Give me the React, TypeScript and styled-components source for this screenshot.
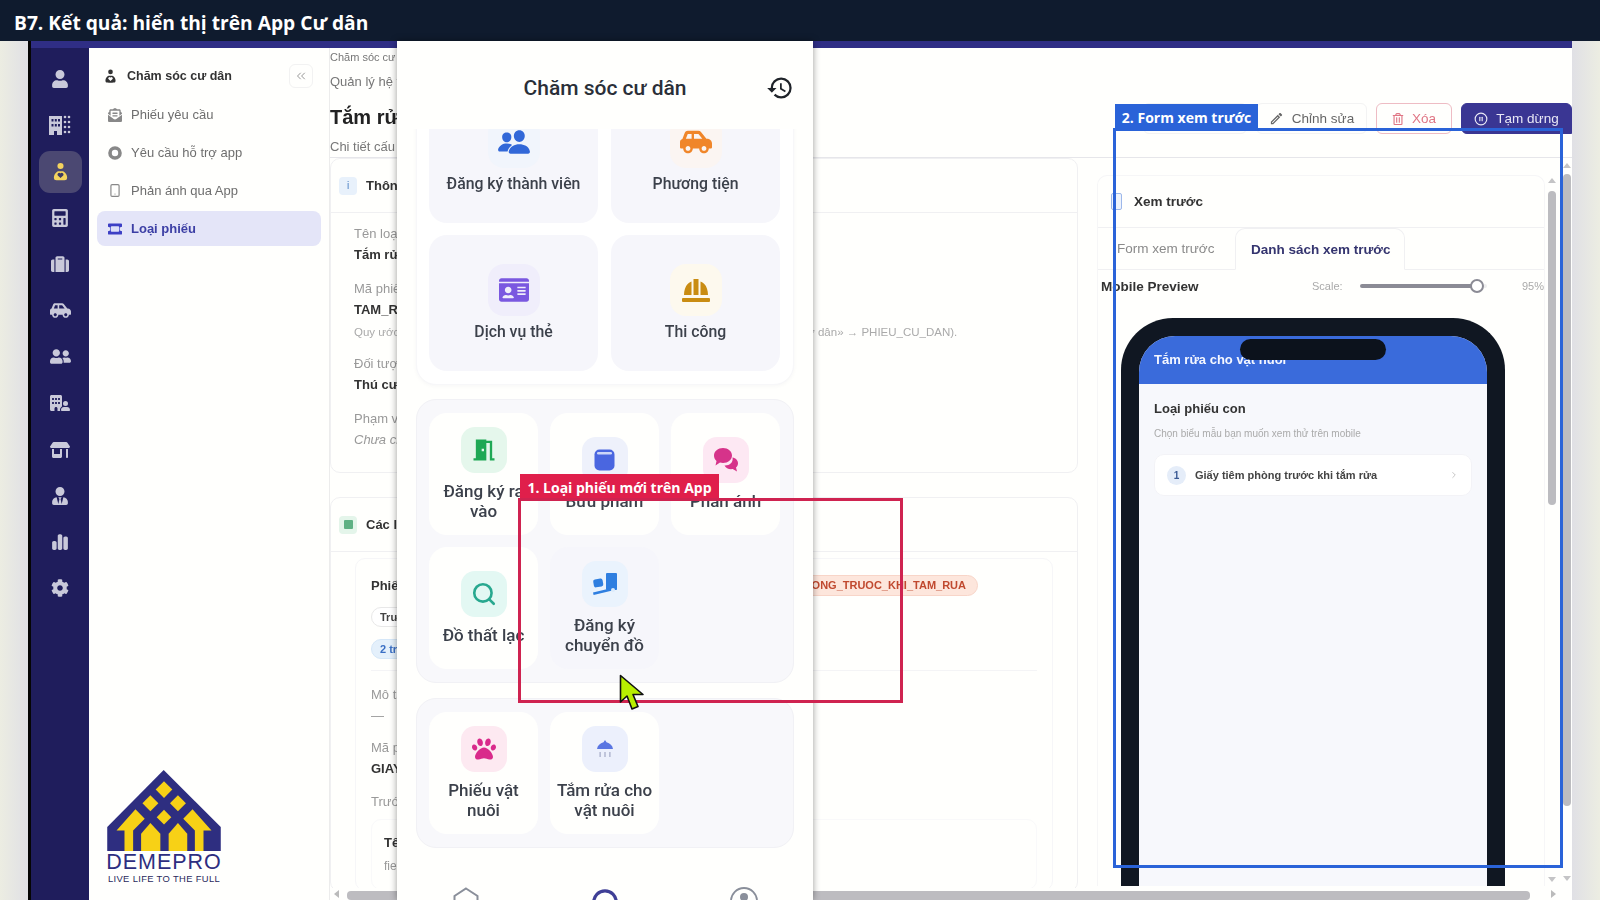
import React from "react";
import styled, { createGlobalStyle } from "styled-components";
import { FaUser, FaCalculator, FaSuitcase, FaCarSide, FaUserFriends, FaUserTie, FaCog, FaPaw, FaIdCard, FaEnvelopeOpenText, FaRegTrashAlt } from "react-icons/fa";
import { FaBuildingUser, FaChartSimple, FaShop } from "react-icons/fa6";
import { MdMeetingRoom, MdHistory, MdOutlineEdit } from "react-icons/md";
import { IoPeople } from "react-icons/io5";
import { Search, Smartphone, Headphones, ChevronsLeft, ChevronRight, CirclePause } from "lucide-react";

const Global = createGlobalStyle`
  html, body { margin: 0; padding: 0; background: #fff; }
  * { box-sizing: border-box; }
`;

const Page = styled.div`
  position: relative;
  width: 1600px;
  height: 900px;
  overflow: hidden;
  display: flex;
  flex-direction: column;
  font-family: "Liberation Sans", Arial, sans-serif;
  background: #fff;
`;
const TitleBar = styled.header`
  height: 41px;
  flex: none;
  background: #0f1b2e;
  color: #fff;
  font: 700 19.2px/45px "Open Sans", sans-serif;
  padding-left: 14px;
`;
const Stage = styled.div`
  flex: 1;
  min-height: 0;
  display: flex;
  position: relative;
`;
const Gutter = styled.div<{ $w: number; $flip?: boolean }>`
  width: ${(p) => p.$w}px;
  flex: none;
  background: linear-gradient(${(p) => (p.$flip ? "270deg" : "90deg")}, #ecede2, #e0e0e5);
`;
const AppFrame = styled.div`
  flex: 1;
  min-width: 0;
  display: flex;
  flex-direction: column;
  border-left: 3px solid #050505;
  background: #fffffd;
  filter: blur(0.35px);
`;
const TopStrip = styled.div`
  height: 7px;
  flex: none;
  background: #2f2e85;
`;
const AppRow = styled.div`
  flex: 1;
  min-height: 0;
  display: flex;
`;
const Sidebar = styled.nav`
  width: 58px;
  flex: none;
  background: #1f1d5c;
  padding-top: 8px;
  display: flex;
  flex-direction: column;
  align-items: center;
`;
const RailItem = styled.div<{ $active?: boolean }>`
  height: 46.3px;
  width: 100%;
  display: flex;
  align-items: center;
  justify-content: center;
  color: #c9c9da;
  font-size: 18px;
  position: relative;
  ${(p) =>
    p.$active &&
    `&::before { content: ""; position: absolute; left: 8px; right: 7px; top: 2px; bottom: 2px; background: #4b4872; border-radius: 11px; }`}
  & > svg { position: relative; }
`;
const SubNav = styled.aside`
  width: 240px;
  flex: none;
  background: #fffffd;
`;
const SubHead = styled.div`
  display: flex;
  align-items: center;
  height: 24px;
  margin: 16px 16px 9px 15px;
  color: #333;
  font-size: 12.5px;
  font-weight: 700;
  gap: 10px;
`;
const CollapseBtn = styled.div`
  margin-left: auto;
  width: 24px;
  height: 24px;
  border: 1px solid #f2f2f2;
  border-radius: 6px;
  display: flex;
  align-items: center;
  justify-content: center;
  color: #888;
`;
const NavList = styled.div`
  display: flex;
  flex-direction: column;
  gap: 3px;
  margin: 0 8px;
`;
const NavItem = styled.div<{ $active?: boolean }>`
  height: 35px;
  border-radius: 8px;
  padding-left: 11px;
  display: flex;
  align-items: center;
  gap: 9px;
  font-size: 13px;
  font-weight: ${(p) => (p.$active ? 700 : 400)};
  color: ${(p) => (p.$active ? "#3c3fa5" : "#6e6e6e")};
  background: ${(p) => (p.$active ? "#e4e5f8" : "transparent")};
  & > svg { width: 14px; flex: none; color: ${(p) => (p.$active ? "#3c3fc5" : "#888")}; }
`;
const Main = styled.main`
  flex: 1;
  min-width: 0;
  display: flex;
  flex-direction: column;
  border-left: 1px solid #ececec;
`;
const PageHead = styled.div`
  height: 110px;
  flex: none;
  display: flex;
  align-items: flex-start;
  justify-content: space-between;
  border-bottom: 1px solid #e6e6ea;
`;
const HeadText = styled.div`
  padding-top: 2px;
  color: #777;
`;
const Crumb = styled.div`
  font-size: 11px;
  line-height: 14px;
`;
const SubTitle = styled.div`
  font-size: 13px;
  line-height: 16px;
  margin-top: 10px;
`;
const PageTitle = styled.h1`
  margin: 13px 0 0;
  font-size: 20px;
  line-height: 28px;
  color: #222;
`;
const Desc = styled.div`
  font-size: 13px;
  line-height: 16px;
  margin-top: 8px;
`;
const Toolbar = styled.div`
  display: flex;
  gap: 9px;
  padding-top: 55px;
`;
const ToolBtn = styled.div<{ $w: number; $tone?: "danger" | "primary" }>`
  width: ${(p) => p.$w}px;
  height: 31px;
  border-radius: 6px 6px ${(p) => (p.$tone === "primary" ? "0 6px" : "6px 6px")};
  display: flex;
  align-items: center;
  justify-content: center;
  gap: 8px;
  font-size: 13.5px;
  border: 1px solid ${(p) => (p.$tone === "danger" ? "#eebcc4" : p.$tone === "primary" ? "#3a3693" : "#f3f3f3")};
  background: ${(p) => (p.$tone === "primary" ? "#3a3693" : "#fffffd")};
  color: ${(p) => (p.$tone === "danger" ? "#e07685" : p.$tone === "primary" ? "#e9e9f6" : "#666")};
`;
const Body = styled.div`
  flex: 1;
  min-height: 0;
  display: flex;
`;
const LeftCol = styled.div`
  width: 748px;
  flex: none;
  display: flex;
  flex-direction: column;
  gap: 24px;
  overflow: hidden;
`;
const Card = styled.section<{ $h?: number }>`
  flex: none;
  border: 1px solid #f0f0f2;
  border-radius: 10px;
  ${(p) => (p.$h ? `height: ${p.$h}px;` : "")}
`;
const CardHead = styled.div`
  height: 54px;
  display: flex;
  align-items: center;
  gap: 9px;
  padding-left: 8px;
  border-bottom: 1px solid #f0f0f2;
  font-size: 13px;
  font-weight: 700;
  color: #333;
`;
const CardGlyph = styled.span<{ $bg: string; $fg: string }>`
  width: 18px;
  height: 18px;
  border-radius: 4px;
  background: ${(p) => p.$bg};
  color: ${(p) => p.$fg};
  font-size: 10px;
  font-weight: 400;
  display: flex;
  align-items: center;
  justify-content: center;
`;
const GreenDot = styled.i`
  width: 9px;
  height: 9px;
  background: #5fb184;
  border-radius: 1px;
`;
const FieldList = styled.div`
  padding: 12px 23px;
  display: flex;
  flex-direction: column;
  gap: 15px;
`;
const Field = styled.div<{ $mt?: number }>`
  margin-top: ${(p) => p.$mt ?? 0}px;
`;
const FieldLabel = styled.div`
  font-size: 13px;
  line-height: 18px;
  color: #999;
`;
const FieldValue = styled.div<{ $italic?: boolean; $muted?: boolean }>`
  margin-top: 2px;
  font-size: 13px;
  line-height: 20px;
  font-weight: ${(p) => (p.$italic || p.$muted ? 400 : 700)};
  font-style: ${(p) => (p.$italic ? "italic" : "normal")};
  color: ${(p) => (p.$italic || p.$muted ? "#999" : "#333")};
`;
const FieldNote = styled.div`
  margin-top: 4px;
  font-size: 11.5px;
  line-height: 16px;
  color: #aaa;
  white-space: nowrap;
`;
const CardPad = styled.div`
  padding: 6px 24px 0;
`;
const InnerCard = styled.div`
  border: 1px solid #f6f6f8;
  border-radius: 10px;
  padding: 15px 15px 0;
`;
const NameRow = styled.div`
  display: flex;
  align-items: center;
  justify-content: space-between;
  height: 22px;
  padding-right: 59px;
  font-size: 13px;
  font-weight: 700;
  color: #333;
`;
const TagPill = styled.span`
  height: 21px;
  padding: 0 11px;
  border-radius: 11px;
  background: #fde6dc;
  border: 1px solid #f8d5c8;
  color: #c0492f;
  font-size: 11px;
  line-height: 19px;
  white-space: nowrap;
`;
const PillRow = styled.div<{ $mt: number }>`
  display: flex;
  margin-top: ${(p) => p.$mt}px;
`;
const SmallPill = styled.span<{ $blue?: boolean }>`
  height: 20px;
  padding: 0 8px;
  border-radius: 10px;
  font-size: 11px;
  line-height: 18px;
  font-weight: 700;
  background: ${(p) => (p.$blue ? "#e4f0fb" : "#fff")};
  border: 1px solid ${(p) => (p.$blue ? "#d5e7f8" : "#e8e8e8")};
  color: ${(p) => (p.$blue ? "#3a6fc4" : "#444")};
  white-space: nowrap;
`;
const Rule = styled.hr`
  border: 0;
  border-top: 1px solid #f4f4f6;
  margin: 11px 0 15px;
`;
const NestedCard = styled.div`
  margin-top: 8px;
  border: 1px solid #f9f9fa;
  border-radius: 10px;
  padding: 14px 12px;
`;
const NestedName = styled.div`
  font-size: 13px;
  line-height: 18px;
  font-weight: 700;
  color: #333;
`;
const NestedKey = styled.div`
  margin-top: 5px;
  font-size: 12px;
  line-height: 18px;
  color: #999;
`;
const PreviewCard = styled.section`
  width: 448px;
  height: 711px;
  flex: none;
  margin: 17px 0 0 19px;
  border: 1px solid #f6f6f7;
  border-bottom: 0;
  border-radius: 10px 10px 0 0;
  overflow: hidden;
`;
const PreviewHead = styled.div`
  height: 52px;
  display: flex;
  align-items: center;
  gap: 12px;
  padding-left: 13px;
  border-bottom: 1px solid #f0f0f2;
  font-size: 13.5px;
  font-weight: 700;
  color: #333;
`;
const PhoneGlyph = styled.i`
  width: 11px;
  height: 17px;
  border: 1.5px solid #9db8ea;
  background: #eef3fc;
  border-radius: 2px;
`;
const Tabs = styled.div`
  height: 42px;
  display: flex;
  align-items: stretch;
  border-bottom: 1px solid #f0f0f2;
`;
const Tab = styled.div<{ $active?: boolean }>`
  width: ${(p) => (p.$active ? "170px" : "137px")};
  padding-left: ${(p) => (p.$active ? "15px" : "19px")};
  display: flex;
  align-items: center;
  font-size: 13.5px;
  font-weight: ${(p) => (p.$active ? 700 : 400)};
  color: ${(p) => (p.$active ? "#35356f" : "#8a8a8a")};
  ${(p) =>
    p.$active &&
    `border: 1px solid #f0f0f2; border-bottom: 1px solid #fffffd; border-radius: 10px 10px 0 0; margin-bottom: -1px; background: #fffffd;`}
`;
const PreviewBar = styled.div`
  height: 32px;
  display: flex;
  align-items: center;
  padding: 0 0 0 3px;
  font-size: 11px;
  color: #aaa;
`;
const PreviewLabel = styled.strong`
  font-size: 13.5px;
  color: #333;
  width: 211px;
`;
const ScaleText = styled.span`
  width: 48px;
`;
const SliderTrack = styled.div`
  position: relative;
  width: 127px;
  height: 4px;
  border-radius: 2px;
  background: linear-gradient(90deg, #8b8b95 92%, #eee 92%);
`;
const SliderThumb = styled.span`
  position: absolute;
  left: 110px;
  top: -5px;
  width: 14px;
  height: 14px;
  border-radius: 50%;
  background: #fff;
  border: 2px solid #8b8b95;
`;
const ScaleValue = styled.span`
  margin-left: auto;
`;
const Device = styled.div`
  width: 384px;
  height: 569px;
  margin: 16px 0 0 23px;
  position: relative;
  border: 18px solid #101722;
  border-bottom: 0;
  border-radius: 52px 52px 0 0;
  background: #101722;
`;
const DeviceScreen = styled.div`
  height: 100%;
  border-radius: 36px 36px 0 0;
  overflow: hidden;
  background: #f7f8fc;
`;
const DeviceBar = styled.div`
  height: 48px;
  background: #3a6bdb;
  color: #f4f7ff;
  padding: 15px 0 0 15px;
  font-size: 13px;
  line-height: 18px;
  font-weight: 700;
`;
const Notch = styled.div`
  position: absolute;
  left: 101px;
  top: 3px;
  width: 146px;
  height: 21px;
  border-radius: 11px;
  background: #0c121c;
`;
const DeviceBody = styled.div`
  padding: 15px 15px;
`;
const DeviceH = styled.div`
  font-size: 13px;
  line-height: 20px;
  font-weight: 700;
  color: #333;
`;
const DeviceHint = styled.div`
  font-size: 10px;
  line-height: 14px;
  margin-top: 8px;
  color: #aaa;
`;
const FormRow = styled.div`
  margin-top: 13px;
  height: 42px;
  background: #fff;
  border: 1px solid #f3f3f7;
  border-radius: 10px;
  display: flex;
  align-items: center;
  padding: 0 12px;
  gap: 9px;
  font-size: 11px;
  font-weight: 700;
  color: #444;
`;
const NumBadge = styled.span`
  width: 19px;
  height: 19px;
  border-radius: 50%;
  background: #e5edf9;
  color: #3b5a94;
  display: flex;
  align-items: center;
  justify-content: center;
  font-size: 10px;
`;
const RowChevron = styled.span`
  margin-left: auto;
  color: #bbb;
  display: flex;
`;
const ScrollCol = styled.div<{ $ml: number; $pt: number; $thumb: number; $gap: number }>`
  width: 8px;
  flex: none;
  margin-left: ${(p) => p.$ml}px;
  padding-top: ${(p) => p.$pt}px;
  display: flex;
  flex-direction: column;
  align-items: center;
  & > b {
    width: 100%;
    flex: none;
    height: ${(p) => p.$thumb}px;
    margin-top: ${(p) => p.$gap}px;
    background: #bcbcc0;
    border-radius: 4px;
  }
`;
const ArrowUp = styled.i`
  width: 0;
  height: 0;
  border: 4px solid transparent;
  border-top: 0;
  border-bottom: 5px solid #c4c4c6;
`;
const ArrowDown = styled.i<{ $mt: number }>`
  width: 0;
  height: 0;
  margin-top: ${(p) => p.$mt}px;
  border: 4px solid transparent;
  border-bottom: 0;
  border-top: 5px solid #c4c4c6;
`;
const HScroll = styled.div`
  height: 12px;
  flex: none;
  display: flex;
  align-items: center;
  padding: 0 16px 0 4px;
  background: #fffffd;
`;
const HThumb = styled.span`
  width: 1183px;
  height: 9px;
  margin-left: 8px;
  margin-top: 3px;
  border-radius: 4px;
  background: #bdbcc0;
`;
const ArrowL = styled.i`
  width: 0;
  height: 0;
  border: 4px solid transparent;
  border-left: 0;
  border-right: 5px solid #bbb;
`;
const ArrowR = styled.i`
  width: 0;
  height: 0;
  margin-left: auto;
  border: 4px solid transparent;
  border-right: 0;
  border-left: 5px solid #bbb;
`;

/* Mobile sheet laid over the web console */
const Sheet = styled.div`
  position: absolute;
  left: 397px;
  top: 0;
  bottom: 0;
  width: 416px;
  display: flex;
  flex-direction: column;
  background: #fffffd;
  box-shadow: 0 0 7px rgba(0, 0, 0, 0.4);
  font-family: Roboto, "Noto Sans", sans-serif;
  filter: blur(0.3px);
`;
const SheetHead = styled.div`
  height: 88px;
  flex: none;
  position: relative;
  z-index: 2;
  background: #fffffd;
  display: flex;
  align-items: center;
  justify-content: center;
  padding-top: 6px;
  font-size: 21px;
  font-weight: 500;
  color: #2a2f38;
`;
const HistoryBtn = styled.span`
  position: absolute;
  right: 19px;
  top: 33px;
  display: flex;
  color: #1f2329;
`;
const SheetScroll = styled.div`
  flex: 1;
  min-height: 0;
  overflow: hidden;
  padding: 0 19px;
  display: flex;
  flex-direction: column;
`;
const Group = styled.div<{ $plain?: boolean; $cols: number; $mt: number }>`
  flex: none;
  width: 378px;
  margin-top: ${(p) => p.$mt}px;
  padding: 13px 13px 13px 12px;
  border-radius: 20px;
  display: grid;
  grid-template-columns: repeat(${(p) => p.$cols}, 1fr);
  gap: 12px ${(p) => (p.$cols === 2 ? 13 : 12)}px;
  background: ${(p) => (p.$plain ? "#fff" : "#f8f8fb")};
  border: 1px solid ${(p) => (p.$plain ? "#f7f7f9" : "#f1f1f5")};
  box-shadow: ${(p) => (p.$plain ? "0 1px 4px rgba(30,30,80,.04)" : "none")};
`;
const Tile = styled.div<{ $big?: boolean; $muted?: boolean }>`
  height: ${(p) => (p.$big ? 136 : 122)}px;
  border-radius: 18px;
  display: flex;
  flex-direction: column;
  align-items: center;
  justify-content: center;
  gap: ${(p) => (p.$big ? 6 : 8)}px;
  background: ${(p) => (p.$big || p.$muted ? "#f6f6fb" : "#fffffd")};
  font-size: ${(p) => (p.$big ? 15.8 : 17)}px;
  line-height: 20px;
  font-weight: 500;
  color: #3c414b;
  text-align: center;
  white-space: nowrap;
`;
const IconBox = styled.span<{ $size: number; $bg: string; $fg: string }>`
  width: ${(p) => p.$size}px;
  height: ${(p) => p.$size}px;
  flex: none;
  border-radius: ${(p) => (p.$size > 50 ? 16 : 14)}px;
  background: ${(p) => p.$bg};
  color: ${(p) => p.$fg};
  display: flex;
  align-items: center;
  justify-content: center;
`;
const BottomNav = styled.div`
  height: 17px;
  flex: none;
  overflow: hidden;
  display: grid;
  grid-template-columns: repeat(3, 1fr);
  justify-items: center;
  padding-top: 4px;
  background: #fffffd;
  position: relative;
`;

/* Tutorial annotations drawn over the recording */
const AnnoBox = styled.div<{ $c: string; $x: number; $y: number; $w: number; $h: number }>`
  position: absolute;
  left: ${(p) => p.$x}px;
  top: ${(p) => p.$y}px;
  width: ${(p) => p.$w}px;
  height: ${(p) => p.$h}px;
  border: 3px solid ${(p) => p.$c};
  pointer-events: none;
`;
const AnnoTag = styled.div<{ $c: string; $x: number; $y: number; $w: number; $h: number }>`
  position: absolute;
  left: ${(p) => p.$x}px;
  top: ${(p) => p.$y}px;
  width: ${(p) => p.$w}px;
  height: ${(p) => p.$h}px;
  background: ${(p) => p.$c};
  color: #fff;
  font: 700 14px/${(p) => p.$h + 3}px "Open Sans", sans-serif;
  text-align: center;
  white-space: nowrap;
`;
const Cursor = styled.svg`
  position: absolute;
  left: 619px;
  top: 674px;
`;
const Logo = styled.div`
  position: absolute;
  left: 107px;
  top: 729px;
  width: 114px;
  display: flex;
  flex-direction: column;
  align-items: center;
  color: #2e2e80;
  & > svg { display: block; }
`;
const LogoName = styled.div`
  font-size: 21.5px;
  line-height: 23px;
  letter-spacing: 1px;
  white-space: nowrap;
`;
const LogoSlogan = styled.div`
  font-size: 9.4px;
  line-height: 10px;
  letter-spacing: 0.35px;
  white-space: nowrap;
  color: #2a2a5c;
`;

const CareIcon = () => (
  <svg width="17" height="20" viewBox="0 0 20 22">
    <circle cx="10" cy="4" r="3.6" fill="#f4d35e" />
    <path d="M3 20c-2-3 0-8 4-10h6c4 2 6 7 4 10-1 1-13 1-14 0z" fill="#f4d35e" />
    <path d="M10 18l-3.2-3a2 2 0 013-2.6l.2.3.2-.3a2 2 0 013 2.6z" fill="#3d3a63" />
  </svg>
);
const CareIconDark = () => (
  <svg width="13" height="15" viewBox="0 0 20 22">
    <circle cx="10" cy="4" r="3.6" fill="#333" />
    <path d="M3 20c-2-3 0-8 4-10h6c4 2 6 7 4 10-1 1-13 1-14 0z" fill="#333" />
    <path d="M10 18l-3.2-3a2 2 0 013-2.6l.2.3.2-.3a2 2 0 013 2.6z" fill="#fff" />
  </svg>
);
const BuildingGrid = () => (
  <svg width="22" height="20" viewBox="0 0 22 20" fill="currentColor">
    <path fillRule="evenodd" d="M0 1h13v19H8v-4H5v4H0zM2.500 4v2.500h2V4zm3.300 0v2.500h2V4zm3.200 0v2.500h2V4zM2.500 9v2.500h2V9zm3.300 0v2.500h2V9zm3.200 0v2.500h2V9z" />
    {[2, 7, 12, 17].map((y) => (
      <g key={y}>
        <circle cx="16" cy={y} r="1.300" />
        <circle cx="20" cy={y} r="1.300" />
      </g>
    ))}
  </svg>
);
const RingIcon = () => (
  <svg width="14" height="14" viewBox="0 0 14 14">
    <circle cx="7" cy="7" r="5" fill="#fff" stroke="#888" strokeWidth="3.600" />
  </svg>
);
const TicketIcon = () => (
  <svg width="15" height="12" viewBox="0 0 15 12">
    <path d="M1 0h13a1 1 0 011 1v2.500a2.500 2.500 0 000 5V11a1 1 0 01-1 1H1a1 1 0 01-1-1V8.500a2.500 2.500 0 000-5V1a1 1 0 011-1z" fill="#3c3fc5" />
    <rect x="3" y="3" width="9" height="6" rx="1" fill="#dcdff8" />
  </svg>
);
const HelmetIcon = () => (
  <svg width="28" height="25" viewBox="0 0 28 25" fill="#c98c12">
    <path d="M2 17C2 10 5 5 9.500 3.500V17zM11.500 1h5v16h-5zM18.500 3.500C23 5 26 10 26 17h-7.500z" />
    <rect x="0" y="20" width="28" height="4" rx="1" />
  </svg>
);
const ParcelIcon = () => (
  <svg width="21" height="22" viewBox="0 0 21 22">
    <rect x="0.500" y="0.500" width="20" height="21" rx="5" fill="#4a66e0" />
    <rect x="3" y="3" width="15" height="2.600" rx="1.300" fill="#cdd6f8" />
  </svg>
);
const ChatIcon = () => (
  <svg width="26" height="26" viewBox="0 0 26 26" fill="#d6338a">
    <path d="M10 1c5 0 9 3.200 9 7.500S15 16 10 16c-1 0-2-.1-3-.4L2.500 18.500l1-4.500C1.800 12.600 1 10.700 1 8.500 1 4.200 5 1 10 1z" />
    <path d="M19.500 10.500c3.300.6 5.500 3 5.500 5.800 0 1.700-.8 3.200-2 4.300l1 4-4.300-2.500c-3.600.6-7-1-8.200-3.600 5 .3 9-3 8-8z" />
  </svg>
);
const DollyIcon = () => (
  <svg width="26" height="22" viewBox="0 0 26 22" fill="#2f7fe0">
    <rect x="14" y="0" width="11" height="17" rx="1" />
    <rect x="1.500" y="6" width="9.500" height="8" rx="2" transform="rotate(-10 6 10)" />
    <path d="M1 19.500l23-5.500.6 2.500-23 5.500z" />
    <circle cx="21" cy="17" r="2" fill="#dcebfb" />
  </svg>
);
const ShowerIcon = () => (
  <svg width="16" height="18" viewBox="0 0 16 18" fill="#5a76e2">
    <path d="M8 0l1.500 2.200C13 3 15.500 5.500 16 9H0C.5 5.500 3 3 6.500 2.200z" />
    <rect x="2.500" y="12" width="1.200" height="5" fill="#a3a9c6" />
    <rect x="7.400" y="12" width="1.200" height="5" fill="#a3a9c6" />
    <rect x="12.300" y="12" width="1.200" height="5" fill="#a3a9c6" />
  </svg>
);
const HomeOutline = () => (
  <svg width="26" height="28" viewBox="0 0 26 28" fill="none" stroke="#8a8f9a" strokeWidth="2">
    <path d="M13 1.500L24.500 9v17h-23V9z" />
  </svg>
);
const UserOutline = () => (
  <svg width="28" height="28" viewBox="0 0 28 28">
    <circle cx="14" cy="14" r="13" fill="none" stroke="#8a8f9a" strokeWidth="1.800" />
    <circle cx="14" cy="10" r="4" fill="#8a8f9a" />
  </svg>
);

const railIcons = [
  <FaUser />, <BuildingGrid />, <CareIcon />, <FaCalculator />, <FaSuitcase />, <FaCarSide size={21} />,
  <FaUserFriends size={21} />, <FaBuildingUser size={20} />, <FaShop size={20} />, <FaUserTie />, <FaChartSimple />, <FaCog />,
];

export default function App() {
  return (
    <Page>
      <Global />
      <TitleBar>B7. Kết quả: hiển thị trên App Cư dân</TitleBar>
      <Stage>
        <Gutter $w={28} />
        <AppFrame>
          <TopStrip />
          <AppRow>
            <Sidebar>
              {railIcons.map((ic, i) => (
                <RailItem key={i} $active={i === 2}>{ic}</RailItem>
              ))}
            </Sidebar>
            <SubNav>
              <SubHead>
                <CareIconDark />
                Chăm sóc cư dân
                <CollapseBtn><ChevronsLeft size={14} strokeWidth={1.5} /></CollapseBtn>
              </SubHead>
              <NavList>
                <NavItem><FaEnvelopeOpenText size={14} />Phiếu yêu cầu</NavItem>
                <NavItem><RingIcon />Yêu cầu hỗ trợ app</NavItem>
                <NavItem><Smartphone size={15} />Phản ánh qua App</NavItem>
                <NavItem $active><TicketIcon />Loại phiếu</NavItem>
              </NavList>
            </SubNav>
            <Main>
              <PageHead>
                <HeadText>
                  <Crumb>Chăm sóc cư dân</Crumb>
                  <SubTitle>Quản lý hệ thống</SubTitle>
                  <PageTitle>Tắm rửa</PageTitle>
                  <Desc>Chi tiết cấu hình</Desc>
                </HeadText>
                <Toolbar>
                  <ToolBtn $w={104} />
                  <ToolBtn $w={111}><MdOutlineEdit size={15} />Chỉnh sửa</ToolBtn>
                  <ToolBtn $w={76} $tone="danger"><FaRegTrashAlt size={12} />Xóa</ToolBtn>
                  <ToolBtn $w={111} $tone="primary"><CirclePause size={14} />Tạm dừng</ToolBtn>
                </Toolbar>
              </PageHead>
              <Body>
                <LeftCol>
                  <Card $h={315}>
                    <CardHead><CardGlyph $bg="#e8f1fb" $fg="#4a7fc4">i</CardGlyph>Thông tin chung</CardHead>
                    <FieldList>
                      <Field>
                        <FieldLabel>Tên loại</FieldLabel>
                        <FieldValue>Tắm rửa</FieldValue>
                      </Field>
                      <Field>
                        <FieldLabel>Mã phiếu</FieldLabel>
                        <FieldValue>TAM_RUA</FieldValue>
                        <FieldNote>Quy ước: viết hoa, không dấu, ngăn cách bằng dấu gạch dưới, ví dụ: tên loại là «Phiếu cư dân» → PHIEU_CU_DAN).</FieldNote>
                      </Field>
                      <Field>
                        <FieldLabel>Đối tượng</FieldLabel>
                        <FieldValue>Thú cưng</FieldValue>
                      </Field>
                      <Field>
                        <FieldLabel>Phạm vi</FieldLabel>
                        <FieldValue $italic>Chưa chọn</FieldValue>
                      </Field>
                    </FieldList>
                  </Card>
                  <Card>
                    <CardHead><CardGlyph $bg="#e4f5ea" $fg="#5fb184"><GreenDot /></CardGlyph>Các loại phiếu con</CardHead>
                    <CardPad>
                      <InnerCard>
                        <NameRow>
                          Phiếu con
                          <TagPill>GIAY_TIEM_PHONG_TRUOC_KHI_TAM_RUA</TagPill>
                        </NameRow>
                        <PillRow $mt={11}><SmallPill>Trước</SmallPill></PillRow>
                        <PillRow $mt={12}><SmallPill $blue>2 trường</SmallPill></PillRow>
                        <Rule />
                        <Field>
                          <FieldLabel>Mô tả</FieldLabel>
                          <FieldValue $muted>—</FieldValue>
                        </Field>
                        <Field $mt={13}>
                          <FieldLabel>Mã phiếu</FieldLabel>
                          <FieldValue>GIAY</FieldValue>
                        </Field>
                        <Field $mt={14}>
                          <FieldLabel>Trước khi</FieldLabel>
                        </Field>
                        <NestedCard>
                          <NestedName>Tên</NestedName>
                          <NestedKey>field</NestedKey>
                        </NestedCard>
                      </InnerCard>
                    </CardPad>
                  </Card>
                </LeftCol>
                <PreviewCard>
                  <PreviewHead><PhoneGlyph />Xem trước</PreviewHead>
                  <Tabs>
                    <Tab>Form xem trước</Tab>
                    <Tab $active>Danh sách xem trước</Tab>
                  </Tabs>
                  <PreviewBar>
                    <PreviewLabel>Mobile Preview</PreviewLabel>
                    <ScaleText>Scale:</ScaleText>
                    <SliderTrack><SliderThumb /></SliderTrack>
                    <ScaleValue>95%</ScaleValue>
                  </PreviewBar>
                  <Device>
                    <DeviceScreen>
                      <DeviceBar>Tắm rửa cho vật nuôi</DeviceBar>
                      <DeviceBody>
                        <DeviceH>Loại phiếu con</DeviceH>
                        <DeviceHint>Chọn biểu mẫu bạn muốn xem thử trên mobile</DeviceHint>
                        <FormRow>
                          <NumBadge>1</NumBadge>
                          Giấy tiêm phòng trước khi tắm rửa
                          <RowChevron><ChevronRight size={10} /></RowChevron>
                        </FormRow>
                      </DeviceBody>
                    </DeviceScreen>
                    <Notch />
                  </Device>
                </PreviewCard>
                <ScrollCol $ml={3} $pt={20} $thumb={314} $gap={8}>
                  <ArrowUp />
                  <b />
                  <ArrowDown $mt={372} />
                </ScrollCol>
                <ScrollCol $ml={7} $pt={5} $thumb={632} $gap={6}>
                  <ArrowUp />
                  <b />
                  <ArrowDown $mt={70} />
                </ScrollCol>
              </Body>
              <HScroll>
                <ArrowL />
                <HThumb />
                <ArrowR />
              </HScroll>
            </Main>
          </AppRow>
        </AppFrame>
        <Gutter $w={28} $flip />

        <Sheet>
          <SheetHead>
            Chăm sóc cư dân
            <HistoryBtn><MdHistory size={28} /></HistoryBtn>
          </SheetHead>
          <SheetScroll>
            <Group $plain $cols={2} $mt={-56}>
              <Tile $big><IconBox $size={52} $bg="#f1f5fc" $fg="#3268d8"><IoPeople size={34} /></IconBox>Đăng ký thành viên</Tile>
              <Tile $big><IconBox $size={52} $bg="#fbf5f2" $fg="#f0862a"><FaCarSide size={32} /></IconBox>Phương tiện</Tile>
              <Tile $big><IconBox $size={52} $bg="#f0eefb" $fg="#7a58e0"><FaIdCard size={30} /></IconBox>Dịch vụ thẻ</Tile>
              <Tile $big><IconBox $size={52} $bg="#fdf9ee" $fg="#c98c12"><HelmetIcon /></IconBox>Thi công</Tile>
            </Group>
            <Group $cols={3} $mt={14}>
              <Tile><IconBox $size={46} $bg="#e5f7ec" $fg="#1fa855"><MdMeetingRoom size={28} /></IconBox>Đăng ký ra<br />vào</Tile>
              <Tile><IconBox $size={46} $bg="#eef1fb" $fg="#4a66e0"><ParcelIcon /></IconBox>Bưu phẩm</Tile>
              <Tile><IconBox $size={46} $bg="#fde8f3" $fg="#d6338a"><ChatIcon /></IconBox>Phản ánh</Tile>
              <Tile><IconBox $size={46} $bg="#e3f8f3" $fg="#28a88f"><Search size={26} strokeWidth={2.4} /></IconBox>Đồ thất lạc</Tile>
              <Tile $muted><IconBox $size={46} $bg="#eaf3fd" $fg="#2f7fe0"><DollyIcon /></IconBox>Đăng ký<br />chuyển đồ</Tile>
            </Group>
            <Group $cols={3} $mt={15}>
              <Tile><IconBox $size={46} $bg="#fde9f1" $fg="#d92a8b"><FaPaw size={24} /></IconBox>Phiếu vật<br />nuôi</Tile>
              <Tile><IconBox $size={46} $bg="#ecf0fc" $fg="#5a76e2"><ShowerIcon /></IconBox>Tắm rửa cho<br />vật nuôi</Tile>
            </Group>
          </SheetScroll>
          <BottomNav>
            <HomeOutline />
            <Headphones size={30} color="#3f3f96" strokeWidth={2.6} />
            <UserOutline />
          </BottomNav>
        </Sheet>

        <Logo>
          <svg width="114" height="81" viewBox="320 508 342 244">
            <polygon points="490,508 662,680 662,752 320,752 320,680" fill="#2e2e80" />
            <g fill="#f7d116">
              <polygon points="491,542 516,567 491,592 466,567" />
              <polygon points="450,584 474,608 450,632 426,608" />
              <polygon points="533,584 557,608 533,632 509,608" />
              <polygon points="491,628 513,650 491,672 469,650" />
              <polygon points="405,626 433,655 398,690 398,752 372,752 372,690 348,690" />
              <polygon points="577,626 549,655 584,690 584,752 610,752 610,690 634,690" />
              <polygon points="422,700 450,668 480,700 480,752 422,752" />
              <polygon points="505,700 533,668 561,700 561,752 505,752" />
            </g>
          </svg>
          <LogoName>DEMEPRO</LogoName>
          <LogoSlogan>LIVE LIFE TO THE FULL</LogoSlogan>
        </Logo>
      </Stage>

      <AnnoBox $c="#cf2350" $x={518} $y={498} $w={385} $h={205} />
      <AnnoTag $c="#e01f4b" $x={520} $y={474} $w={199} $h={24}>1. Loại phiếu mới trên App</AnnoTag>
      <AnnoBox $c="#2a63d8" $x={1113} $y={128} $w={450} $h={740} />
      <AnnoTag $c="#2a63d8" $x={1115} $y={104} $w={143} $h={24}>2. Form xem trước</AnnoTag>
      <Cursor width="28" height="38" viewBox="0 0 28 38">
        <polygon points="1.500,1.500 1.500,28 8,22 13,35 19,32.500 14,20.500 24,20.500" fill="#b8ee00" stroke="#111" strokeWidth="1.600" strokeLinejoin="round" />
      </Cursor>
    </Page>
  );
}
